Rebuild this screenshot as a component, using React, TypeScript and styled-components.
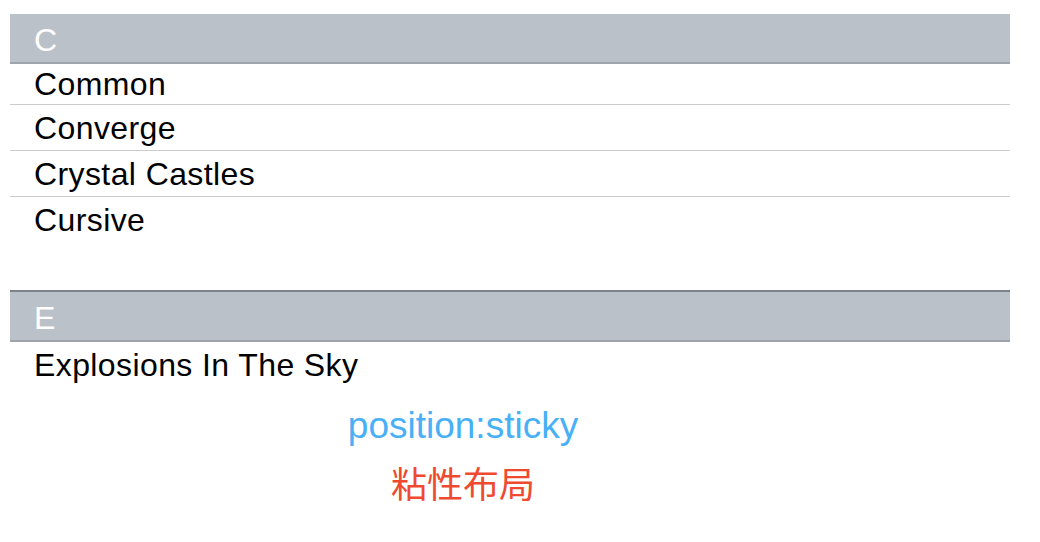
import React from "react";
import styled, { createGlobalStyle } from "styled-components";

const Global = createGlobalStyle`
  html, body { margin: 0; padding: 0; background: #ffffff; }
  body { font-family: "Liberation Sans", Arial, "Noto Sans CJK SC", sans-serif; }
`;

const Page = styled.div`
  padding: 14px 30px 0 10px;
`;

const List = styled.div`
  width: 1000px;
  display: flex;
  flex-direction: column;
`;

const Section = styled.section<{ $gapAfter?: number }>`
  display: flex;
  flex-direction: column;
  margin-bottom: ${(p) => p.$gapAfter ?? 0}px;
`;

const Header = styled.div<{ $topBorder?: boolean }>`
  box-sizing: content-box;
  height: 46px;
  background: #bac1c8;
  border-top: ${(p) => (p.$topBorder ? "2px solid #7b8389" : "none")};
  border-bottom: 2px solid #9fa4aa;
  color: #ffffff;
  font-size: 32px;
  letter-spacing: 0.4px;
  line-height: 48px;
  padding: 2px 0 0 24px;
`;

const Row = styled.div<{ $first?: boolean; $h?: number }>`
  height: ${(p) => p.$h ?? 44}px;
  border-top: ${(p) => (p.$first ? "none" : "1px solid #cccccc")};
  color: #000000;
  font-size: 32px;
  letter-spacing: 0.4px;
  line-height: ${(p) => p.$h ?? 44}px;
  padding: 1px 0 0 24px;
  white-space: nowrap;
`;

const Captions = styled.div`
  width: 906px;
  margin-top: 8px;
  text-align: center;
`;

const Blue = styled.div`
  color: #48b0f6;
  font-size: 37px;
  line-height: 60px;
`;

const Red = styled.div`
  color: #ef4a30;
  font-size: 36px;
  line-height: 52px;
  font-family: "Noto Sans CJK SC", sans-serif;
`;

export default function App() {
  return (
    <>
      <Global />
      <Page>
        <List>
          <Section $gapAfter={48}>
            <Header>C</Header>
            <Row $first $h={39}>Common</Row>
            <Row>Converge</Row>
            <Row>Crystal Castles</Row>
            <Row>Cursive</Row>
          </Section>
          <Section>
            <Header $topBorder>E</Header>
            <Row $first $h={45}>Explosions In The Sky</Row>
          </Section>
        </List>
        <Captions>
          <Blue>position:sticky</Blue>
          <Red>粘性布局</Red>
        </Captions>
      </Page>
    </>
  );
}
